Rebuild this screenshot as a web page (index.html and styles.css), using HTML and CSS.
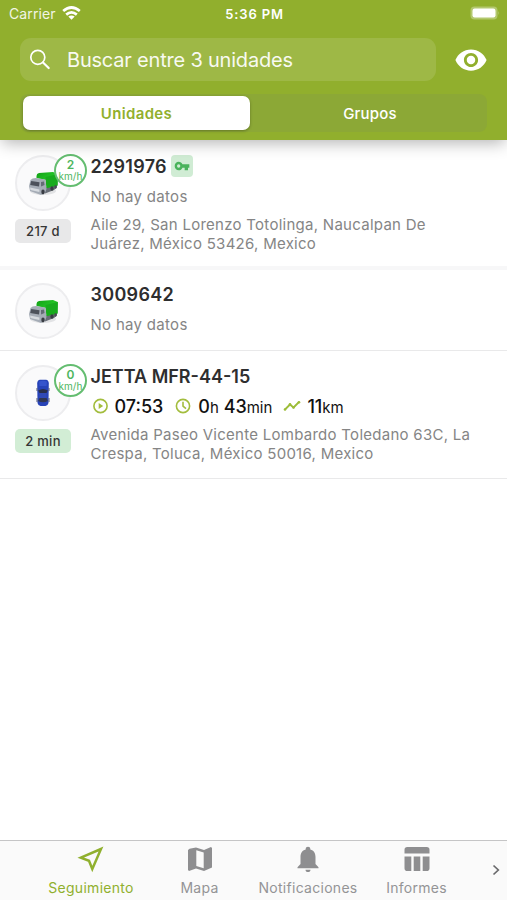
FILE: index.html
```html
<!DOCTYPE html>
<html lang="es">
<head>
<meta charset="utf-8">
<title>Unidades</title>
<link rel="stylesheet" href="styles.css">
</head>
<body>
<svg class="defs" width="0" height="0" aria-hidden="true">
  <defs>
    <linearGradient id="cargo" x1="0" y1="0" x2="1" y2="1"><stop offset="0" stop-color="#12a016"/><stop offset=".5" stop-color="#22c425"/><stop offset="1" stop-color="#0f9914"/></linearGradient>
    <symbol id="truck" viewBox="0 0 30 25">
      <ellipse cx="15" cy="20" rx="13" ry="4" fill="#e2e3e5"/>
      <path d="M15 17 L29 13 L29 16.500 L26 19 L17 22.500 Z" fill="#686d76"/>
      <path d="M8.500 5 Q8.500 2.500 11 2 L25 1 L29.800 3 L29.500 14.500 L18.500 17 L17.500 9 L8.500 7 Z" fill="url(#cargo)"/>
      <path d="M17.500 6 L29.800 3 L29.500 14.500 L18.500 17 Z" fill="#18ab1d"/>
      <path d="M2.500 9 Q4 7 8 7 L17.500 8.500 L18.500 18 L17 22 L13 24 L2 20 L1 15 Z" fill="#a5acb6"/>
      <path d="M3.200 10 L11.500 11.200 L11 15.500 L2.200 14 Z" fill="#4c515b"/>
      <path d="M13 11 L16 10.500 L16.500 14 L13 15.500 Z" fill="#646b76"/>
      <path d="M2 16.500 L11.500 18.500 L11.300 21 L2.500 19 Z" fill="#d7dbe0"/>
      <ellipse cx="15" cy="21" rx="1.700" ry="2.400" fill="#383c43"/>
      <ellipse cx="24" cy="17.500" rx="1.600" ry="2.200" fill="#383c43"/>
      <ellipse cx="27.500" cy="15.800" rx="1.200" ry="1.900" fill="#484c52"/>
    </symbol>
  </defs>
</svg>
<div class="app">
  <header class="header">
    <div class="status">
      <div class="carrier"><span class="carrier-name">Carrier</span>
        <svg width="19" height="14" viewBox="0 0 19 14" fill="none" stroke="#fff" stroke-width="2.700"><path d="M1.200 5.100 Q9.500 -2.100 17.800 5.100"/><path d="M4.200 8.600 Q9.500 4.100 14.800 8.600"/><path d="M9.500 13.700 L6.300 10.500 Q9.500 8.300 12.700 10.500 Z" fill="#fff" stroke="none"/></svg>
      </div>
      <span class="clock">5:36 PM</span>
      <svg class="battery" width="30" height="14" viewBox="0 0 30 14"><rect x=".5" y=".5" width="27" height="13" rx="4" fill="#b3c86f"/><rect x="2.500" y="2.500" width="23" height="9" rx="2.200" fill="#fff"/><path d="M28.300 4.800 Q30 7 28.300 9.200 Z" fill="#b3c86f"/></svg>
    </div>
    <div class="search-row">
      <div class="search">
        <svg width="22" height="22" viewBox="0 0 22 22" fill="none" stroke="#fff" stroke-width="1.700" stroke-linecap="round"><circle cx="8.800" cy="8.300" r="7"/><path d="M14 13.500 L19.700 19" stroke-width="2.200"/></svg>
        <span class="placeholder">Buscar entre 3 unidades</span>
      </div>
      <svg class="eye" width="34" height="34" viewBox="0 0 24 24" fill="#fff"><path d="M12 4.500C7 4.500 2.730 7.610 1 12c1.730 4.390 6 7.500 11 7.500s9.270-3.110 11-7.500c-1.730-4.390-6-7.500-11-7.500zM12 17c-2.760 0-5-2.240-5-5s2.240-5 5-5 5 2.240 5 5-2.240 5-5 5zm0-8c-1.660 0-3 1.340-3 3s1.340 3 3 3 3-1.340 3-3-1.340-3-3-3z"/></svg>
    </div>
    <div class="segments">
      <div class="segment active"><span>Unidades</span></div>
      <div class="segment"><span>Grupos</span></div>
    </div>
  </header>
  <main class="list">
    <section class="unit first">
      <div class="side">
        <div class="avatar"><svg class="truck" width="30" height="25"><use href="#truck"/></svg>
          <div class="speed"><b>2</b><span>km/h</span></div></div>
        <div class="age">217 d</div>
      </div>
      <div class="info">
        <div class="title"><span class="name number">2291976</span>
          <span class="key"><svg width="16" height="16" viewBox="0 0 24 24" fill="#49b35b"><path d="M12.650 9.500C11.830 7.170 9.610 5.500 7 5.500c-3.310 0-6 2.690-6 6.500s2.690 6.500 6 6.500c2.610 0 4.830-1.670 5.650-4H16v4h5v-4h2v-5H12.650zM7 14.500a2.500 2.500 0 1 1 0-5 2.500 2.500 0 0 1 0 5z"/></svg></span></div>
        <div class="nodata">No hay datos</div>
        <div class="address">Aile 29, San Lorenzo Totolinga, Naucalpan De<br>Juárez, México 53426, Mexico</div>
      </div>
    </section>
    <section class="unit second">
      <div class="side"><div class="avatar"><svg class="truck" width="30" height="25"><use href="#truck"/></svg></div></div>
      <div class="info">
        <div class="title"><span class="name number">3009642</span></div>
        <div class="nodata">No hay datos</div>
      </div>
    </section>
    <section class="unit third">
      <div class="side">
        <div class="avatar"><svg class="car" width="14" height="28" viewBox="0 0 14 28"><path d="M1.200 4 Q1.500 1 4 .8 H10 Q12.500 1 12.800 4 L12.500 24 Q12 26.500 9.500 27 H4.500 Q2 26.500 1.500 24 Z" fill="#2743b8"/><path d="M3 2.500 Q7 1 11 2.500 L10.500 7 H3.500 Z" fill="#3654cc"/><path d="M2.200 11.500 Q7 8.500 11.800 11.500 L10.500 14 H3.500 Z" fill="#282e4c"/><path d="M3.500 14 H10.500 V19 H3.500 Z" fill="#3049b7"/><path d="M3.500 19 H10.500 L11.800 22 Q7 24.500 2.200 22 Z" fill="#303653"/><path d="M1 9 V12 M13 9 V12 M1 19 V23 M13 19 V23" stroke="#555a78"/></svg>
          <div class="speed"><b>0</b><span>km/h</span></div></div>
        <div class="age fresh">2 min</div>
      </div>
      <div class="info">
        <div class="title"><span class="name">JETTA MFR-44-15</span></div>
        <div class="stats">
          <div class="stat"><svg width="18" height="18" viewBox="0 0 18 18" fill="none" stroke="#a3bd3e" stroke-width="1.600"><circle cx="9.500" cy="9" r="6.600"/><path d="M7.700 6 L12.200 9 L7.700 12 Z" fill="#a3bd3e" stroke="none"/></svg><span class="time">07:53</span></div>
          <div class="stat"><svg width="18" height="18" viewBox="0 0 18 18" fill="none" stroke="#a3bd3e" stroke-width="1.600"><circle cx="9" cy="9" r="6.600"/><path d="M9 4.800 V9.200 L12 11.700"/></svg><span class="duration">0<small>h</small> 43<small>min</small></span></div>
          <div class="stat"><svg width="18" height="18" viewBox="0 0 18 18" fill="none" stroke="#9dbd39" stroke-width="1.800" stroke-linejoin="round"><path d="M2 12.500 L7 7.500 L10.500 10.500 L16 5"/><g fill="#9dbd39" stroke="none"><circle cx="2" cy="12.500" r="1.300"/><circle cx="7" cy="7.300" r="1.300"/><circle cx="10.500" cy="10.500" r="1.300"/><circle cx="16" cy="5.200" r="1.300"/></g></svg><span class="distance">11<small>km</small></span></div>
        </div>
        <div class="address">Avenida Paseo Vicente Lombardo Toledano 63C, La<br>Crespa, Toluca, México 50016, Mexico</div>
      </div>
    </section>
  </main>
  <nav class="tabs">
    <div class="tab selected"><svg width="28" height="28" viewBox="0 0 28 28" fill="none" stroke="#90b02e" stroke-width="2.500"><path d="M24 4 L3.800 12.700 L12 15.800 L15.300 24 Z"/></svg><span>Seguimiento</span></div>
    <div class="tab"><svg width="28" height="28" viewBox="0 0 28 28" fill="#8e8e90"><path fill-rule="evenodd" d="M2 5 L3.500 3.800 L10 2.500 L18 5 L25 2 L26 3 V22.500 L18 26 L10 23.500 L3 26 L2 25 Z M10.300 5.300 V21 L17.700 23.300 V7.500 Z"/></svg><span>Mapa</span></div>
    <div class="tab"><svg width="28" height="28" viewBox="0 0 28 28" fill="#8e8e90"><path d="M14 1.700c-1.400 0-2.300.9-2.300 2.200v.6C8 5.500 6.500 8.400 6.500 12v7L3.500 22.300v1h21v-1L21.500 19v-7c0-3.600-1.500-6.500-5.200-7.500v-.6c0-1.300-.9-2.200-2.300-2.200zM11.500 24.700h5c0 1.600-1 2.300-2.500 2.300s-2.500-.7-2.500-2.300z"/></svg><span>Notificaciones</span></div>
    <div class="tab"><svg width="28" height="28" viewBox="0 0 28 28" fill="#8e8e90"><path d="M1.500 8.500 V4.800 Q1.500 2 4.300 2 H23.700 Q26.500 2 26.500 4.800 V8.500 Z M1.500 11.500 H8.300 V26 H4.300 Q1.500 26 1.500 23.200 Z M10.700 11.500 H17.300 V26 H10.700 Z M19.700 11.500 H26.500 V23.200 Q26.500 26 23.700 26 H19.700 Z"/></svg><span>Informes</span></div>
    <svg class="more" width="10" height="12" viewBox="0 0 10 12" fill="none" stroke="#69696b" stroke-width="1.700"><path d="M2.500 1.500 L7.300 6 L2.500 10.500"/></svg>
  </nav>
</div>
</body>
</html>
```

FILE: styles.css
```css
* { box-sizing: border-box; }
body { margin: 0; background: #fff; font-family: Inter, "Liberation Sans", sans-serif; }
svg { display: block; flex: none; }
.defs { position: absolute; }
.app { width: 507px; height: 900px; display: flex; flex-direction: column; overflow: hidden; }
.header { height: 140px; flex: none; background: #91af2d; color: #fff; box-shadow: 0 5px 15px -2px rgba(0,0,0,.3); z-index: 1; }
.status { height: 38px; padding: 6px 7px 0 9px; display: grid; grid-template-columns: 1fr auto 1fr; align-items: start; font-size: 13px; line-height: 16px; }
.carrier { display: flex; gap: 6px; }
.carrier-name { font-size: 14px; letter-spacing: .12px; opacity: .88; }
.clock { font-weight: 600; letter-spacing: .85px; }
.battery { justify-self: end; }
.search-row { display: flex; align-items: center; padding-left: 20px; gap: 18px; }
.search { width: 416px; height: 43px; border-radius: 11px; background: #9eb846; display: flex; align-items: center; padding: 1px 9px 0; gap: 16px; }
.placeholder { font-size: 20px; letter-spacing: -.2px; opacity: .93; white-space: nowrap; }
.segments { width: 467px; height: 38px; margin: 13px 0 0 20px; padding: 2px 3px; border-radius: 8px; display: flex; background: #8ca836; }
.segment { width: 227px; height: 34px; flex: none; display: flex; align-items: center; justify-content: center; font-size: 15px; font-weight: 500; letter-spacing: .2px; border-radius: 7px; }
.segment:last-child { width: 240px; }
.active { background: #fff; color: #91af2d; font-weight: 600; letter-spacing: .35px; box-shadow: 0 1px 3px rgba(0,0,0,.3); }
.list { flex: 1; }
.unit { display: flex; gap: 19.500px; padding: 15px 15px 0; border-bottom: 1.500px solid #e9e9ea; }
.first { height: 130px; border-bottom: 4px solid #f7f7f8; }
.second { height: 81px; padding-top: 13px; }
.third { height: 128px; padding-top: 14px; }
.side { width: 56px; flex: none; }
.avatar { width: 56px; height: 56px; border: 2px solid #ededef; border-radius: 50%; background: #fafafb; display: flex; align-items: center; justify-content: center; position: relative; }
.speed { position: absolute; left: 37px; top: -3px; width: 33px; height: 33px; border: 2px solid #64bd70; border-radius: 50%; background: #fff; color: #4eb65e; display: flex; flex-direction: column; align-items: center; justify-content: center; }
.speed b { font-size: 12px; line-height: 10px; font-weight: 600; padding-bottom: 1px; }
.speed span { font-size: 10px; line-height: 10px; }
.age { width: 56px; height: 24px; margin-top: 8px; border-radius: 5px; background: #e8e8e9; color: #353535; font-size: 13px; font-weight: 500; letter-spacing: .3px; line-height: 24px; text-align: center; }
.fresh { background: #d2edd5; }
.info { flex: 1; white-space: nowrap; }
.title { height: 22px; display: flex; align-items: center; gap: 4px; color: #2e2e2f; font-size: 18px; font-weight: 600; }
.number { letter-spacing: .3px; }
.key { width: 22px; height: 22px; border-radius: 4px; background: #d0ecd4; display: flex; align-items: center; justify-content: center; }
.nodata { height: 26px; margin-top: 7px; color: #858585; font-size: 15px; letter-spacing: .3px; line-height: 26px; }
.address { margin-top: 6px; color: #858585; font-size: 15px; letter-spacing: .27px; line-height: 18.500px; }
.stats { display: flex; height: 26px; margin-top: 6px; margin-bottom: 7px; align-items: center; color: #111; font-size: 18px; font-weight: 500; gap: 11px; }
.stat { display: flex; align-items: center; gap: 6px; }
.stat small { font-size: 15px; font-weight: 400; }
.tabs { height: 60px; flex: none; background: #fafafa; border-top: 1px solid #c5c5c6; display: grid; grid-template-columns: 108px 109px 108px 109px 20px; padding-left: 37px; }
.tab { display: flex; flex-direction: column; align-items: center; padding-top: 4px; color: #949496; font-size: 14px; letter-spacing: .28px; line-height: 18px; white-space: nowrap; }
.tab span { margin-top: 6px; }
.selected { color: #90b02e; }
.more { margin: 23px 0 0 20px; }
```
